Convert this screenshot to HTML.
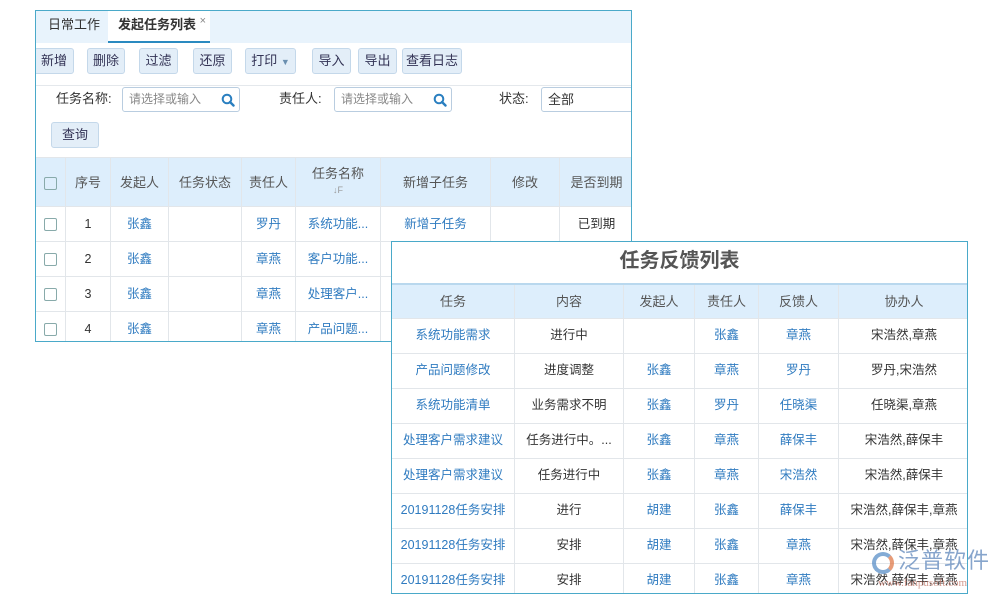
<!DOCTYPE html>
<html><head><meta charset="utf-8"><style>
*{margin:0;padding:0;box-sizing:border-box}
body{width:1000px;height:600px;background:#fff;position:relative;overflow:hidden;font-family:"Liberation Sans","Noto Sans CJK SC",sans-serif;font-size:12px;color:#333}
.a{position:absolute}
#L{left:35px;top:10px;width:597px;height:332px;border:1px solid #4aa9c9;overflow:hidden;background:#fff}
.tabs{height:32px;background:#e8f3fc;position:relative}
.tab{position:absolute;top:0;height:32px;line-height:28px;font-size:13px}
.btn{position:absolute;top:37px;height:26px;line-height:24px;background:#e3eef8;border:1px solid #c4d8ea;border-radius:3px;color:#335;font-size:13px;text-align:center}
.inp{position:absolute;top:76px;height:25px;border:1px solid #b9cde0;border-radius:3px;color:#888;padding-left:6px;line-height:23px}
.inp svg{position:absolute;right:4px;top:5px}
.lbl{position:absolute;top:80px;font-size:13px;line-height:16px}
table{border-collapse:collapse;table-layout:fixed;position:absolute}
td,th{border:1px solid #e2e6ea;text-align:center;font-weight:normal;white-space:nowrap;overflow:hidden;padding:0;line-height:15px}
th{background:#ddeefc;color:#555;font-size:13px}
td{font-size:12.5px}
.b{color:#2f7bc0}
.cb{display:inline-block;width:13px;height:13px;border:1px solid #8aa;border-radius:2px;vertical-align:middle}
#R{left:391px;top:241px;width:577px;height:353px;border:1px solid #4aa9c9;background:#fff;overflow:hidden}
</style></head><body>
<div id="L" class="a">
 <div class="tabs"><div class="tab" style="left:12px">日常工作</div>
 <div class="tab" style="left:72px;width:102px;background:#fff;border-bottom:2px solid #2a8ac0;padding-left:10px;font-weight:bold">发起任务列表 <span style="font-weight:normal;color:#888;font-size:11px;position:relative;top:-5px">×</span></div></div>
 <div class="btn" style="left:-2px;width:40px">新增</div>
 <div class="btn" style="left:51px;width:38px">删除</div>
 <div class="btn" style="left:103px;width:39px">过滤</div>
 <div class="btn" style="left:157px;width:39px">还原</div>
 <div class="btn" style="left:209px;width:51px">打印 <span style="font-size:9px;color:#6a8fb0">▼</span></div>
 <div class="btn" style="left:276px;width:39px">导入</div>
 <div class="btn" style="left:322px;width:39px">导出</div>
 <div class="btn" style="left:366px;width:60px">查看日志</div>
 <div class="a" style="left:0;top:74px;width:596px;height:1px;background:#e4e8ec"></div>
 <div class="lbl" style="left:20px">任务名称:</div>
 <div class="inp" style="left:86px;width:118px">请选择或输入<svg width="14" height="14" viewBox="0 0 14 14"><circle cx="6" cy="6" r="4.3" fill="none" stroke="#2a7fc0" stroke-width="2"/><path d="M9 9l3.5 3.5" stroke="#2a7fc0" stroke-width="2.4" stroke-linecap="round"/></svg></div>
 <div class="lbl" style="left:243px">责任人:</div>
 <div class="inp" style="left:298px;width:118px">请选择或输入<svg width="14" height="14" viewBox="0 0 14 14"><circle cx="6" cy="6" r="4.3" fill="none" stroke="#2a7fc0" stroke-width="2"/><path d="M9 9l3.5 3.5" stroke="#2a7fc0" stroke-width="2.4" stroke-linecap="round"/></svg></div>
 <div class="lbl" style="left:463px">状态:</div>
 <div class="inp" style="left:505px;width:100px;color:#333;font-size:13px">全部</div>
 <div class="btn" style="left:15px;top:111px;width:48px">查询</div>
 <table style="left:-1px;top:146px;width:598px">
 <colgroup><col style="width:30px"><col style="width:45px"><col style="width:58px"><col style="width:73px"><col style="width:54px"><col style="width:85px"><col style="width:110px"><col style="width:69px"><col style="width:74px"></colgroup>
 <tr style="height:49px"><th><span class="cb"></span></th><th>序号</th><th>发起人</th><th>任务状态</th><th>责任人</th><th>任务名称<br><span style="font-size:9px;color:#999">↓F</span></th><th>新增子任务</th><th>修改</th><th>是否到期</th></tr>
 <tr style="height:35px"><td><span class="cb"></span></td><td>1</td><td class="b">张鑫</td><td></td><td class="b">罗丹</td><td class="b">系统功能...</td><td class="b">新增子任务</td><td></td><td>已到期</td></tr>
 <tr style="height:35px"><td><span class="cb"></span></td><td>2</td><td class="b">张鑫</td><td></td><td class="b">章燕</td><td class="b">客户功能...</td><td></td><td></td><td></td></tr>
 <tr style="height:35px"><td><span class="cb"></span></td><td>3</td><td class="b">张鑫</td><td></td><td class="b">章燕</td><td class="b">处理客户...</td><td></td><td></td><td></td></tr>
 <tr style="height:35px"><td><span class="cb"></span></td><td>4</td><td class="b">张鑫</td><td></td><td class="b">章燕</td><td class="b">产品问题...</td><td></td><td></td><td></td></tr>
 </table>
</div>
<div id="R" class="a">
 <div style="height:41px;line-height:38px;text-align:center;font-size:20px;font-weight:bold;color:#555">任务反馈列表</div>
 <table style="left:-1px;top:41px;width:578px">
 <colgroup><col style="width:123px"><col style="width:109px"><col style="width:71px"><col style="width:64px"><col style="width:80px"><col style="width:131px"></colgroup>
 <tr style="height:34px;border-top:2px solid #b9d8ee"><th>任务</th><th>内容</th><th>发起人</th><th>责任人</th><th>反馈人</th><th>协办人</th></tr>
 <tr style="height:35px"><td class="b">系统功能需求</td><td>进行中</td><td></td><td class="b">张鑫</td><td class="b">章燕</td><td>宋浩然,章燕</td></tr>
 <tr style="height:35px"><td class="b">产品问题修改</td><td>进度调整</td><td class="b">张鑫</td><td class="b">章燕</td><td class="b">罗丹</td><td>罗丹,宋浩然</td></tr>
 <tr style="height:35px"><td class="b">系统功能清单</td><td>业务需求不明</td><td class="b">张鑫</td><td class="b">罗丹</td><td class="b">任晓渠</td><td>任晓渠,章燕</td></tr>
 <tr style="height:35px"><td class="b">处理客户需求建议</td><td>任务进行中。...</td><td class="b">张鑫</td><td class="b">章燕</td><td class="b">薛保丰</td><td>宋浩然,薛保丰</td></tr>
 <tr style="height:35px"><td class="b">处理客户需求建议</td><td>任务进行中</td><td class="b">张鑫</td><td class="b">章燕</td><td class="b">宋浩然</td><td>宋浩然,薛保丰</td></tr>
 <tr style="height:35px"><td class="b">20191128任务安排</td><td>进行</td><td class="b">胡建</td><td class="b">张鑫</td><td class="b">薛保丰</td><td>宋浩然,薛保丰,章燕</td></tr>
 <tr style="height:35px"><td class="b">20191128任务安排</td><td>安排</td><td class="b">胡建</td><td class="b">张鑫</td><td class="b">章燕</td><td>宋浩然,薛保丰,章燕</td></tr>
 <tr style="height:35px"><td class="b">20191128任务安排</td><td>安排</td><td class="b">胡建</td><td class="b">张鑫</td><td class="b">章燕</td><td>宋浩然,薛保丰,章燕</td></tr>
 </table>
</div>
<div class="a" style="left:872px;top:552px;width:22px;height:22px;border-radius:50%;border:4px solid #5a8fc8;border-right-color:#e07a4a;opacity:.75"></div>
<div class="a" style="left:898px;top:548px;font-size:22px;line-height:26px;color:#6a8fc0;opacity:.8;letter-spacing:1px">泛普软件</div>
<div class="a" style="left:878px;top:577px;font-size:11px;line-height:13px;color:#c07060;opacity:.7;font-family:'Liberation Serif',serif">www.fanpusoft.com</div>
</body></html>
